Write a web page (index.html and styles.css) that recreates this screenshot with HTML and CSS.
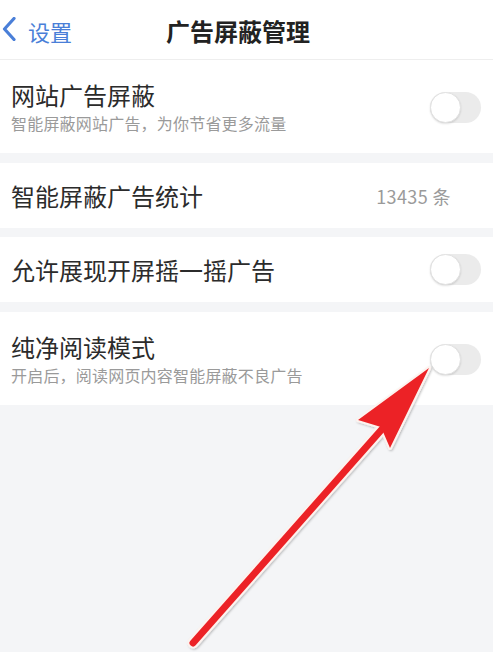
FILE: index.html
```html
<!DOCTYPE html>
<html lang="zh-CN">
<head>
    <meta charset="UTF-8">
    <title>广告屏蔽管理</title>
    <link rel="stylesheet" href="styles.css">
</head>
<body>
    <div class="page">
        <header class="topbar">
            <a href="#" class="back">
                <svg class="back-icon" width="14" height="24" viewBox="0 0 14 24">
                    <path d="M12 1.5 L2.5 12 L12 22.5" fill="none" stroke="#4a7fd8" stroke-width="3.2" stroke-linecap="round" stroke-linejoin="round"/>
                </svg>
                <span>设置</span>
            </a>
            <h1>广告屏蔽管理</h1>
        </header>

        <div class="row tall">
            <div class="text">
                <div class="title">网站广告屏蔽</div>
                <div class="sub">智能屏蔽网站广告，为你节省更多流量</div>
            </div>
            <span class="switch"></span>
        </div>

        <div class="row">
            <div class="title">智能屏蔽广告统计</div>
            <span class="count">13435 条</span>
        </div>

        <div class="row">
            <div class="title">允许展现开屏摇一摇广告</div>
            <span class="switch"></span>
        </div>

        <div class="row tall">
            <div class="text">
                <div class="title">纯净阅读模式</div>
                <div class="sub">开启后，阅读网页内容智能屏蔽不良广告</div>
            </div>
            <span class="switch"></span>
        </div>

        <!-- 标注箭头 -->
        <svg class="arrow" width="493" height="652" viewBox="0 0 493 652">
            <defs>
                <filter id="shade" x="-10%" y="-10%" width="120%" height="120%">
                    <feDropShadow dx="1" dy="1" stdDeviation="1.2" flood-color="#000" flood-opacity="0.25"/>
                </filter>
            </defs>
            <g filter="url(#shade)">
                <line x1="193" y1="643" x2="383" y2="428" stroke="#fdf3ef" stroke-width="11" stroke-linecap="round"/>
                <polygon points="429,368 358,420 381,427 390,448" fill="#fdf3ef" stroke="#fdf3ef" stroke-width="4" stroke-linejoin="round"/>
                <line x1="193" y1="643" x2="383" y2="428" stroke="#ec2327" stroke-width="7" stroke-linecap="round"/>
                <polygon points="429,368 358,420 381,427 390,448" fill="#ec2327"/>
            </g>
        </svg>
    </div>
</body>
</html>
```

FILE: styles.css
```css
body {
    margin: 0;
    padding: 0;
    background: #f4f5f7;
    font-family: "Noto Sans CJK SC", "Noto Sans", sans-serif;
    color: #2b2b2b;
}
.page {
    position: relative;
    width: 493px;
    height: 652px;
    overflow: hidden;
    background: #f4f5f7;
}
.topbar {
    display: flex;
    align-items: center;
    height: 60px;
    box-sizing: border-box;
    background: #fff;
    border-bottom: 1px solid #eeeeee;
    padding-left: 2px;
}
.back {
    display: flex;
    align-items: center;
    gap: 12px;
    color: #4a7fd8;
    text-decoration: none;
    font-size: 22px;
    margin-top: -2px;
}
.back span {
    margin-top: 4px;
}
.topbar h1 {
    margin: 0 0 0 94px;
    font-size: 24px;
    font-weight: bold;
    color: #222;
    line-height: 30px;
    margin-top: 2px;
}
.row {
    display: flex;
    align-items: center;
    justify-content: space-between;
    background: #fff;
    height: 65px;
    box-sizing: border-box;
    padding: 0 12px 0 11px;
    margin-bottom: 10px;
}
.row.tall {
    height: 93px;
    padding-top: 1px;
}
.row:nth-of-type(2) {
    margin-bottom: 9px;
}
.title {
    font-size: 24px;
    line-height: 30px;
    color: #2b2b2b;
}
.sub {
    font-size: 16px;
    line-height: 22px;
    margin-top: 2px;
    color: #9a9a9a;
    letter-spacing: 0.2px;
}
.count {
    font-size: 18px;
    letter-spacing: 0.4px;
    color: #9a9a9a;
    margin-right: 30px;
}
.switch {
    position: relative;
    width: 51px;
    height: 31px;
    border-radius: 16px;
    background: #ebebeb;
    flex-shrink: 0;
}
.switch::after {
    content: "";
    position: absolute;
    left: 0;
    top: 0;
    width: 29px;
    height: 29px;
    border-radius: 50%;
    background: #fff;
    border: 1px solid #e2e2e2;
    box-shadow: 0 1px 2px rgba(0, 0, 0, 0.12);
}
.arrow {
    position: absolute;
    left: 0;
    top: 0;
}
```
